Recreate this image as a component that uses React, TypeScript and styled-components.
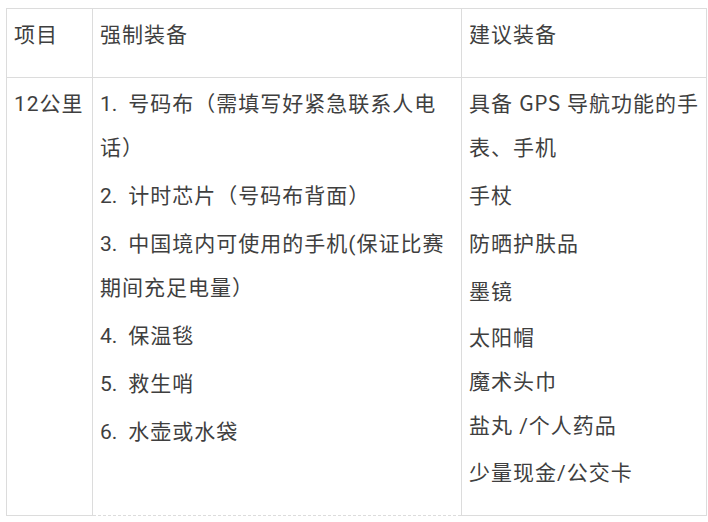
import React from 'react';
import styled, { createGlobalStyle } from 'styled-components';

const GlobalStyle = createGlobalStyle`
  html, body {
    margin: 0;
    background: #ffffff;
  }
  body {
    padding: 8px 0 0 6px;
    font-family: Roboto, "Noto Sans CJK SC", sans-serif;
    color: #3f3f3f;
  }
`;

const Table = styled.table`
  border-collapse: collapse;
  table-layout: fixed;
  width: 700px;
  font-size: 21px;
  letter-spacing: 1px;
`;

const Cell = styled.td<{ $dashedBottom?: boolean }>`
  border: 1px solid #dcdcdc;
  border-bottom-style: ${p => (p.$dashedBottom ? 'dashed' : 'solid')};
  vertical-align: top;
  padding: 4px 2px 20px 7px;
  line-height: 44px;
  white-space: nowrap;
`;

const HeadCell = styled(Cell).attrs({ as: 'th' })`
  font-weight: normal;
  text-align: left;
`;

const Item = styled.p<{ $before?: number }>`
  margin: ${p => p.$before ?? 0}px 0 0 0;
`;

const Num = styled.span`
  letter-spacing: 0;
  margin-right: 11px;
`;

const Latin = styled.span`
  font-family: "Noto Sans CJK SC", sans-serif;
  letter-spacing: 0.5px;
  line-height: 1;
`;

// each entry holds the lines as the column wraps them
const mandatory: string[][] = [
  ['号码布（需填写好紧急联系人电', '话）'],
  ['计时芯片（号码布背面）'],
  ['中国境内可使用的手机(保证比赛', '期间充足电量）'],
  ['保温毯'],
  ['救生哨'],
  ['水壶或水袋'],
];

const suggested: [React.ReactNode[], number][] = [
  [[<>具备 <Latin>GPS</Latin> 导航功能的手</>, '表、手机'], 0],
  [['手杖'], 4],
  [['防晒护肤品'], 4],
  [['墨镜'], 4],
  [['太阳帽'], 2],
  [['魔术头巾'], 0],
  [['盐丸 /个人药品'], 0],
  [['少量现金/公交卡'], 3],
];

const Lines: React.FC<{ lines: React.ReactNode[] }> = ({ lines }) => (
  <>
    {lines.map((line, i) => (
      <React.Fragment key={i}>
        {i > 0 && <br />}
        {line}
      </React.Fragment>
    ))}
  </>
);

const App: React.FC = () => (
  <>
    <GlobalStyle />
    <Table>
      <colgroup>
        <col style={{ width: 86 }} />
        <col style={{ width: 369 }} />
        <col style={{ width: 245 }} />
      </colgroup>
      <thead>
        <tr>
          <HeadCell>项目</HeadCell>
          <HeadCell>强制装备</HeadCell>
          <HeadCell>建议装备</HeadCell>
        </tr>
      </thead>
      <tbody>
        <tr>
          <Cell>12公里</Cell>
          <Cell $dashedBottom>
            {mandatory.map((lines, i) => (
              <Item key={i} $before={i === 0 ? 0 : 4}>
                <Num>{i + 1}.</Num>
                <Lines lines={lines} />
              </Item>
            ))}
          </Cell>
          <Cell>
            {suggested.map(([lines, before], i) => (
              <Item key={i} $before={before}>
                <Lines lines={lines} />
              </Item>
            ))}
          </Cell>
        </tr>
      </tbody>
    </Table>
  </>
);

export default App;
